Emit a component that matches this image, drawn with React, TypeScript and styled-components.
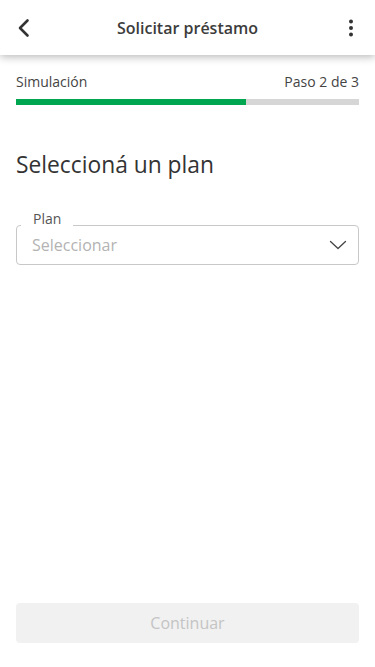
import styled, { createGlobalStyle } from 'styled-components'

const GlobalStyle = createGlobalStyle`
	html, body {
		margin: 0;
		padding: 0;
		background: #fff;
	}
	* {
		box-sizing: border-box;
	}
	body {
		font-family: 'Open Sans', 'Noto Sans', sans-serif;
		color: #333;
	}
`

export default function App() {
	return (
		<S.Page>
			<GlobalStyle />
			<S.Header>
				<S.IconButton aria-label="Volver">
					<svg width="24" height="24" viewBox="0 0 24 24" fill="none">
						<path d="M15.5 4.5L8 12l7.5 7.5" stroke="#333" strokeWidth="2.6" strokeLinecap="round" strokeLinejoin="round" />
					</svg>
				</S.IconButton>
				<S.Title>Solicitar préstamo</S.Title>
				<S.IconButton aria-label="Más opciones">
					<svg width="24" height="24" viewBox="0 0 24 24" fill="#333">
						<circle cx="12" cy="5.5" r="2" />
						<circle cx="12" cy="12" r="2" />
						<circle cx="12" cy="18.5" r="2" />
					</svg>
				</S.IconButton>
			</S.Header>

			<S.Content>
				<S.StepRow>
					<span>Simulación</span>
					<span>Paso 2 de 3</span>
				</S.StepRow>
				<S.Track>
					<S.Fill $percent={67} />
				</S.Track>

				<S.Heading>Seleccioná un plan</S.Heading>

				<S.Field>
					<S.FieldLabel>Plan</S.FieldLabel>
					<S.Placeholder>Seleccionar</S.Placeholder>
					<svg width="18" height="10" viewBox="0 0 18 10" fill="none">
						<path d="M1.5 1.5l7.5 7 7.5-7" stroke="#444" strokeWidth="1.3" strokeLinecap="round" strokeLinejoin="round" />
					</svg>
				</S.Field>
			</S.Content>

			<S.Footer>
				<S.ContinueButton disabled>Continuar</S.ContinueButton>
			</S.Footer>
		</S.Page>
	)
}

const Page = styled.div`
	display: flex;
	flex-direction: column;
	min-height: 100vh;
`

const Header = styled.header`
	display: flex;
	align-items: center;
	justify-content: space-between;
	height: 55px;
	padding: 0 12px;
	background: #fff;
	box-shadow: 0 2px 8px rgba(0, 0, 0, 0.28);
	position: relative;
	z-index: 1;
`

const IconButton = styled.button`
	display: flex;
	align-items: center;
	justify-content: center;
	width: 24px;
	height: 24px;
	padding: 0;
	border: none;
	background: none;
`

const Title = styled.h1`
	margin: 0;
	font-size: 16px;
	font-weight: 600;
	color: #3c3c3c;
`

const Content = styled.main`
	flex: 1;
	display: flex;
	flex-direction: column;
	padding: 17px 16px 0;
`

const StepRow = styled.div`
	display: flex;
	justify-content: space-between;
	font-size: 14px;
	line-height: 20px;
	color: #444;
`

const Track = styled.div`
	margin-top: 7px;
	height: 6px;
	background: #d6d6d6;
`

const Fill = styled.div<{ $percent: number }>`
	width: ${(p) => p.$percent}%;
	height: 100%;
	background: #00a650;
`

const Heading = styled.h2`
	margin: 44px 0 0;
	font-size: 22.8px;
	line-height: 31px;
	font-weight: 400;
	color: #333;
`

const Field = styled.div`
	position: relative;
	margin-top: 45px;
	display: flex;
	align-items: center;
	justify-content: space-between;
	height: 40px;
	padding: 0 11px 0 15px;
	border: 1px solid #c8c8c8;
	border-radius: 4px;
`

const FieldLabel = styled.span`
	position: absolute;
	left: 4px;
	top: -17px;
	padding: 0 12px;
	background: #fff;
	font-size: 14px;
	line-height: 20px;
	color: #555;
`

const Placeholder = styled.span`
	font-size: 16px;
	color: #b3b3b3;
`

const Footer = styled.footer`
	padding: 0 16px 24px;
`

const ContinueButton = styled.button`
	width: 100%;
	height: 40px;
	border: none;
	border-radius: 4px;
	background: #f1f1f1;
	color: #c4c4c4;
	font-family: 'Open Sans', 'Noto Sans', sans-serif;
	font-size: 16px;
`

const S = {
	Page,
	Header,
	IconButton,
	Title,
	Content,
	StepRow,
	Track,
	Fill,
	Heading,
	Field,
	FieldLabel,
	Placeholder,
	Footer,
	ContinueButton,
}
